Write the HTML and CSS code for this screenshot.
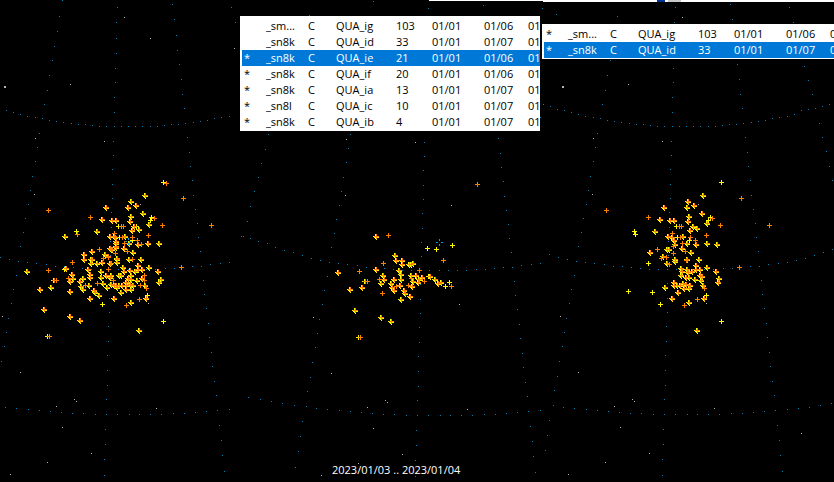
FILE: index.html
```html
<!DOCTYPE html>
<html lang="en">
<head>
<meta charset="utf-8">
<title>Meteor radiants</title>
<link rel="stylesheet" href="styles.css">
</head>
<body>
<main class="sky">
  <svg class="panel" role="img" aria-label="Radiants, all"><g id="left" transform="translate(0 0)"></g></svg>
  <svg class="panel" role="img" aria-label="Radiants, QUA_ie"><g id="middle" transform="translate(75 1)"></g></svg>
  <svg class="panel" role="img" aria-label="Radiants, QUA_id"><g id="right" transform="translate(15 0)"></g></svg>

  <div class="strip"><i class="tab"></i><i class="tab tab-muted"></i></div>

  <div class="list list-main">
    <table>
      <colgroup><col class="c-mark"><col class="c-net"><col class="c-kind"><col class="c-code"><col class="c-count"><col class="c-date"><col class="c-end"><col class="c-rest"></colgroup>
      <tbody>
        <tr><td></td><td>_sm...</td><td>C</td><td>QUA_ig</td><td>103</td><td>01/01</td><td>01/06</td><td>01</td></tr>
        <tr><td></td><td>_sn8k</td><td>C</td><td>QUA_id</td><td>33</td><td>01/01</td><td>01/07</td><td>01</td></tr>
        <tr class="selected"><td>*</td><td>_sn8k</td><td>C</td><td>QUA_ie</td><td>21</td><td>01/01</td><td>01/06</td><td>01</td></tr>
        <tr><td>*</td><td>_sn8k</td><td>C</td><td>QUA_if</td><td>20</td><td>01/01</td><td>01/06</td><td>01</td></tr>
        <tr><td>*</td><td>_sn8k</td><td>C</td><td>QUA_ia</td><td>13</td><td>01/01</td><td>01/07</td><td>01</td></tr>
        <tr><td>*</td><td>_sn8l</td><td>C</td><td>QUA_ic</td><td>10</td><td>01/01</td><td>01/07</td><td>01</td></tr>
        <tr><td>*</td><td>_sn8k</td><td>C</td><td>QUA_ib</td><td>4</td><td>01/01</td><td>01/07</td><td>01</td></tr>
      </tbody>
    </table>
  </div>

  <div class="list list-side">
    <table>
      <colgroup><col class="c-mark"><col class="c-net"><col class="c-kind"><col class="c-code"><col class="c-count"><col class="c-date"><col class="c-end"><col class="c-rest"></colgroup>
      <tbody>
        <tr><td>*</td><td>_sm...</td><td>C</td><td>QUA_ig</td><td>103</td><td>01/01</td><td>01/06</td><td>01</td></tr>
        <tr class="selected"><td>*</td><td>_sn8k</td><td>C</td><td>QUA_id</td><td>33</td><td>01/01</td><td>01/07</td><td>01</td></tr>
      </tbody>
    </table>
  </div>

  <p class="period">2023/01/03 .. 2023/01/04</p>
</main>
<script src="sky.js"></script>
</body>
</html>
```
FILE: styles.css
```css
* { box-sizing: border-box; }

body {
  margin: 0;
  background: #000;
  color: #fff;
  font: 11px/16px "Open Sans", "Noto Sans", sans-serif;
}

.sky {
  position: relative;
  display: grid;
  grid-template-columns: 236fr 307fr 291fr;
  min-height: 100vh;
  overflow: hidden;
}

.panel {
  display: block;
  width: 100%;
  height: 100%;
  overflow: hidden;
  shape-rendering: crispEdges;
}

.grid { fill: #0082c8; }
.star { fill: #b4b4b4; }
.yellow { fill: #ffff00; }
.orange { fill: #ff8000; }
.centre { fill: #00a0dc; }

.strip {
  position: absolute;
  top: 0;
  left: 429px;
  right: 0;
  display: flex;
  gap: 3px;
  height: 2px;
  padding-left: 228px;
  background: linear-gradient(#fff, #fff) 0 0 / 100% 1px no-repeat,
              linear-gradient(#fff, #fff) 114px 0 / 100% 2px no-repeat;
}

.tab { width: 8px; background: #003399; }
.tab-muted { width: 13px; background: #c8c8c8; }

.list {
  position: absolute;
  overflow: hidden;
  background: #fff;
  color: #000;
}

.list-main { top: 16px; left: 240px; width: 300px; padding: 2px 0 1px 2px; }
.list-side { top: 24px; left: 542px; right: 0; padding: 2px 0 1px 2px; }

.list table {
  width: 308px;
  table-layout: fixed;
  border-collapse: collapse;
}

.list td {
  height: 16px;
  padding: 0 0 0 2px;
  white-space: nowrap;
}

.selected { background: #0078d7; color: #fff; }

.c-mark { width: 22px; }
.c-net { width: 42px; }
.c-kind { width: 28px; }
.c-code { width: 60px; }
.c-count { width: 36px; }
.c-date { width: 52px; }
.c-end { width: 44px; }
.c-rest { width: 24px; }

.period {
  position: absolute;
  left: 332px;
  bottom: 4px;
  margin: 0;
}
```
FILE: sky.js
```js
// Coordinate grid, drawn as one-pixel dots in every panel.
const gridDots = `
62,0 59,16 57,31 54,46 52,60 49,75 47,90 44,104 39,133 37,147 35,161 32,176
30,190 28,204 25,218 23,232 20,246 16,275 13,289 11,303 8,318 6,332 4,346 1,361 -1,376 -4,390 -9,420 -11,435 -13,450 -16,466
117,7 116,22 116,38 116,53 115,68 115,82 114,97 114,112 113,141 113,155 112,169
112,184 112,198 111,212 111,227 110,241 110,255 109,283 109,298 109,312 108,326 108,341 107,355 107,370 107,385 106,399 105,429 105,444 104,459 104,475
172,4 174,19 176,35 177,50 179,64 181,79 182,94 184,108 187,137 189,152 190,166
192,180 193,195 195,209 197,223 198,237 200,251 203,280 204,294 206,308 208,323 209,337 211,352 212,366 214,381 216,395 219,425 221,440 222,455 224,471
231,7 235,22 246,66 250,80 254,94 261,123 264,137 268,151 271,166 274,180
-2,14 -43,133 -46,148 -50,162 -53,176 -57,190 -61,205 -64,220 -68,235
-15,104 -8,106 -1,109 6,110 13,112 20,114 27,116 35,117 42,118 49,120 56,121 63,122 71,123 78,124 85,124 92,125 99,126 106,126 114,126
121,126 128,126 135,126 142,126 150,126 157,126 164,125 171,124 178,124 185,123 193,122 200,121 207,120 214,118 221,117 229,116 236,114
243,110 250,109 257,108 264,106 271,104
-70,235 -61,237 -53,240 -44,242 -36,246 -27,249 -18,251 -9,254
0,257 9,259 18,261 27,262 36,263 46,264 55,266 64,266 73,267 82,268 91,269 100,269 109,269 118,269 128,269 137,269 146,269 155,269 165,268 174,268 183,267 192,266 201,266 210,264 220,263 229,262 238,260 247,258 256,255 265,252 274,249
-63,396 -51,398 -40,400 -29,402 -17,404 -5,405 5,407 16,408 28,409 39,410 50,411 61,412 72,413 83,413 95,414 106,414 117,414 129,414 139,414 150,414 161,414 173,413 184,413 195,412 206,411 217,410 229,409 240,408 251,407 262,405 273,403`;

const stars = `124,17 150,38 234,48 70,84 35,138 104,141 34,194 140,204 2,316 148,303
20,372 56,406 74,399 76,401 156,408 62,427 91,453 47,462 10,474 243,433`;

// Radiants are measured in thirds of a pixel from the corner of a tile.
// o and y are single marks, b is an orange mark over yellow ones.
const radiants = {
  left: [
    [0, 180, `o145,91 b318,83 o271,112 b307,119 b336,122 b349,120 b292,153 y229,154 o232,163 b196,168
      b332,170 b342,170 b350,185 b348,198 b330,206 b336,209 o346,220 o298,208 b276,215 b253,223 b316,223
      o324,232 o310,235 o253,238 b276,238 b353,236`],
    [110, 180, `y160,7 o169,10 o220,55 b107,45 b63,64 b78,76 b56,82 b101,101 b64,108 b62,125 y125,113 o133,115
      y121,121 b118,132 o157,136 o304,136 y26,139 o35,139 o40,139 b7,122 b19,120 y78,140 b72,140 b68,151 b88,147
      o115,166 b116,190 b148,191 o68,172 o82,181 y66,181 b84,194 o95,193 b59,190 o43,190 b44,205 o52,213 b70,217
      o12,160 b45,168 o38,172 y29,172 b15,172 b20,190 b18,202 b4,208 o16,220 b22,237 b59,237 o66,238 o94,238`],
    [0, 255, `b83,50 o145,46 o217,22 y194,43 b199,41 y161,76 o163,76 o169,76 b154,96 b120,102 b134,163 b211,185
      b241,195 y142,244 o148,244 b212,110 b216,58 b220,69 o206,71 b210,80 b251,69 b241,80 b271,68 b264,43 b270,57
      b268,90 o256,90 b244,95 b250,102 b282,105 b285,112 b299,121 b271,130 y307,148 b343,129 o293,86 b303,50
      o325,43 b305,68 b320,60 b310,85 b322,98 b332,68 b334,87 b344,90 b253,13 b275,14 b275,26 b292,26 b308,22
      y316,3 o324,5 b330,26`],
    [110, 255, `o4,26 b22,12 b22,21 b59,12 o68,13 b94,14 b117,37 b146,49 o214,37 b153,72 b149,82 y113,122
      b108,129 o88,133 b63,142 o49,151 y160,199 b89,225 b12,129 b33,112 b41,38 b42,50 b86,32 b85,42 b98,42
      b60,45 b75,48 b64,60 b35,62 b27,62 b56,70 b65,73 b83,75 b97,70 o102,62 o102,77 b50,82 b60,88 b70,92
      b18,90 b28,92 b38,92 b48,92 b50,102 b65,102 o91,91 b106,91 o109,100 b3,62 o10,76 b22,97`]
  ],
  middle: [
    [320, 170, `o472,43 o205,196 b169,199 y397,226 y322,235 y349,238 b226,256`],
    [320, 255, `b56,53 o118,49 o190,25 b170,44 y134,79 o137,79 o142,79 b127,98 b92,103 o187,115 b107,166
      b184,188 b214,198 y116,247 o121,247 b190,62 b193,72 o179,73 b183,84 b223,72 b214,84 b244,59 b244,72
      b238,46 b240,92 o229,94 b217,98 b224,105 b254,106 b257,115 b272,124 b244,133 o265,90 b278,94 b280,80
      b274,60 o275,71 y285,64 b290,62 o297,46 b294,82 b298,73 b306,66 o313,79 y326,65 b332,63 b347,72
      b354,84 b365,82 y376,94 y388,82 o394,94 o370,16 b229,17 b248,16 b248,27 b267,28 b275,28 b280,24`]
  ],
  right: [
    [590, 170, `y394,37 b341,75 o454,85 b296,94 b312,105 b291,112 b222,113 o49,121 b336,131 b298,139 b296,155
      y360,143 o366,145 y355,151 b352,161 o391,166 o538,166 o175,142 b211,149 b241,152 b254,150 y260,169
      o268,169 o274,169 y306,170 b311,169 b302,181 b321,176 y133,184 y136,192 b197,183 o247,190 b236,200
      b246,202 y263,202 o272,201 b279,199 o302,202 o349,196 b351,220 b382,222 b252,212 b255,222 o250,230
      o277,220 b293,220 y298,211 o316,212 b318,224 b278,235 o286,243 b304,247 b232,237 b238,238 o202,238
      b180,247 o250,250`],
    [590, 255, `y175,25 b232,25 o238,28 b221,3 o228,8 o214,10 b257,12 b257,20 b293,12 o288,15 b328,14
      b351,37 o448,37 b380,50 b388,70 b384,82 y115,109 y187,112 y211,148 b227,98 b247,129 b266,112 y348,121
      b342,129 o322,133 b297,142 o283,151 y394,199 b323,225 b275,40 b276,50 b293,42 b295,52 b306,48 b319,32
      b318,42 b331,42 b274,62 b290,68 b299,68 b317,74 b330,62 b336,64 b334,75 b341,90 o344,100 b252,82
      b254,92 b262,92 b272,92 b281,85 b290,88 b302,92 b284,100 b298,100`]
  ]
};

// Page position of each panel's coordinate origin.
const origins = { left: [0, 0], middle: [311, 1], right: [558, 0] };

const pairs = text => text.trim().split(/\s+/).map(p => p.split(",").map(Number));
const dot = ([x, y]) => `M${x} ${y}h1v1h-1z`;
const plus = (x, y) => `M${x - 2} ${y}h5v1h-5z M${x} ${y - 2}h1v5h-1z`;

function addPath(group, name, d) {
  const path = document.createElementNS("http://www.w3.org/2000/svg", "path");
  path.setAttribute("class", name);
  path.setAttribute("d", d);
  group.append(path);
}

for (const [id, tiles] of Object.entries(radiants)) {
  const group = document.getElementById(id);
  const [ox, oy] = origins[id];
  addPath(group, "grid", pairs(gridDots).map(dot).join(""));
  addPath(group, "star", pairs(stars).map(dot).join("") + "M4 86h2v2h-2z");

  let yellow = "";
  let orange = "";
  for (const [tx, ty, text] of tiles) {
    for (const mark of text.trim().split(/\s+/)) {
      const [mx, my] = mark.slice(1).split(",").map(Number);
      const x = tx + Math.floor(mx / 3) - ox;
      const y = ty + Math.floor(my / 3) - oy;
      if (mark[0] === "y") yellow += plus(x, y);
      else orange += plus(x, y);
      if (mark[0] === "b") yellow += plus(x - 1, y) + plus(x, y + 1);
    }
  }
  addPath(group, "yellow", yellow);
  addPath(group, "orange", orange);
}

addPath(document.getElementById("middle"), "centre",
  "M125 241h2v1h-2z M130 241h2v1h-2z M128 238h1v2h-1z M128 243h1v2h-1z");
addPath(document.getElementById("left"), "centre",
  "M125 241h2v1h-2z M130 241h2v1h-2z M128 238h1v2h-1z M128 243h1v2h-1z");
```
